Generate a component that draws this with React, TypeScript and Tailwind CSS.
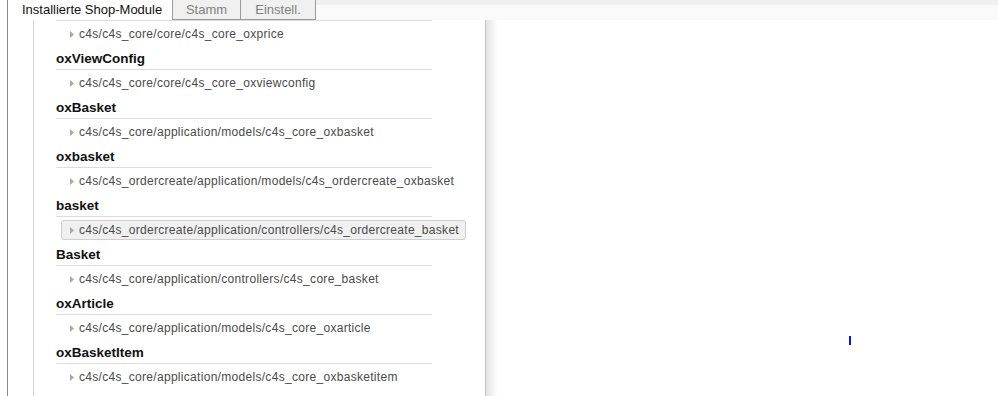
const entries = [
  { name: "oxViewConfig", path: "c4s/c4s_core/core/c4s_core_oxviewconfig" },
  { name: "oxBasket", path: "c4s/c4s_core/application/models/c4s_core_oxbasket" },
  { name: "oxbasket", path: "c4s/c4s_ordercreate/application/models/c4s_ordercreate_oxbasket" },
  { name: "basket", path: "c4s/c4s_ordercreate/application/controllers/c4s_ordercreate_basket", active: true },
  { name: "Basket", path: "c4s/c4s_core/application/controllers/c4s_core_basket" },
  { name: "oxArticle", path: "c4s/c4s_core/application/models/c4s_core_oxarticle" },
  { name: "oxBasketItem", path: "c4s/c4s_core/application/models/c4s_core_oxbasketitem" },
];

function PathRow({ path, active }: { path: string; active?: boolean }) {
  return (
    <div className="flex items-start h-[27px] pt-[3px] pl-[5px]">
      <div
        className={
          "flex h-[20px] items-center pl-[8px] pr-[6px] rounded-[3px] border " +
          (active ? "border-[#cfcfcf] bg-[#f0f0f0]" : "border-transparent")
        }
      >
        <svg width="5" height="7" viewBox="0 0 5 7" className="mr-[4px] shrink-0">
          <path d="M0 0L4 3.5L0 7Z" fill="#a8a8a8" />
        </svg>
        <span className="text-[12px] leading-[18px] tracking-[0.3px] text-[#4a4a4a] whitespace-nowrap">{path}</span>
      </div>
    </div>
  );
}

export default function App() {
  return (
    <div className="relative w-[998px] h-[396px] bg-white overflow-hidden pl-[7px] font-['Liberation_Sans',Arial,sans-serif]">
      <div className="h-full border-l border-[#8a8a8a] flex flex-col">
        <div className="flex h-[20px] shrink-0">
          <div className="w-[164px] pl-[14px] text-[13px] leading-[19px] text-[#111] bg-white">
            Installierte Shop-Module
          </div>
          <div className="w-[69px] border-l border-r border-b border-[#9a9a9a] bg-[#f0f0f0] text-center text-[13px] leading-[19px] text-[#808080]">
            Stamm
          </div>
          <div className="w-[75px] border-r border-b border-[#9a9a9a] bg-[#f0f0f0] text-center text-[13px] leading-[19px] text-[#808080]">
            Einstell.
          </div>
          <div className="flex-1 flex flex-col">
            <div className="h-[5px] bg-[#f0f0f0]" />
            <div className="h-[15px] bg-[#fafafa]" />
          </div>
        </div>
        <div className="flex flex-1 min-h-0">
          <div className="w-[25px] shrink-0" />
          <div className="w-[453px] shrink-0 border-l border-r border-l-[#d4d4d4] border-r-[#c4c4c4] pl-[22px] overflow-hidden">
            <div className="w-[376px] border-t border-[#dcdcdc]" />
            <PathRow path="c4s/c4s_core/core/c4s_core_oxprice" />
            {entries.map((e) => (
              <div key={e.name + e.path}>
                <div className="w-[376px] h-[22px] border-b border-[#dcdcdc] text-[13.5px] leading-[21px] font-bold text-[#111]">
                  {e.name}
                </div>
                <PathRow path={e.path} active={e.active} />
              </div>
            ))}
          </div>
          <div className="w-[12px] shrink-0 bg-gradient-to-r from-[#e4e4e4] to-white" />
        </div>
      </div>
      <div className="absolute left-[849px] top-[336px] w-[2px] h-[9px] bg-[#1010f0]" />
    </div>
  );
}
